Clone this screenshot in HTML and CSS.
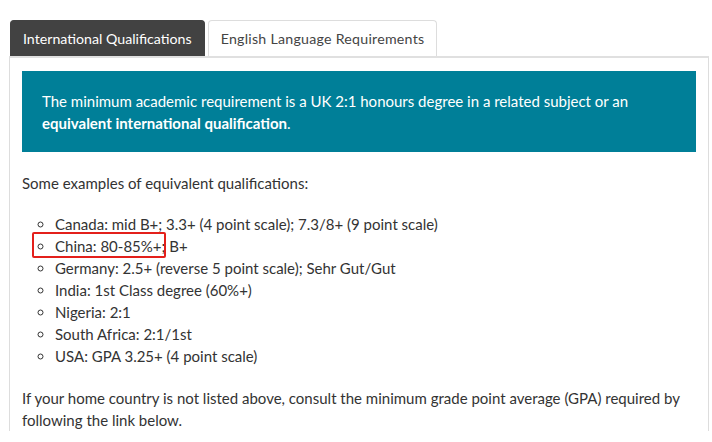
FILE: index.html
```html
<!DOCTYPE html>
<html lang="en">
<head>
<meta charset="utf-8">
<title>Entry requirements</title>
<link rel="stylesheet" href="styles.css">
</head>
<body>
<div class="tabs-wrap">
  <ul class="tabs">
    <li class="tab active">International Qualifications</li>
    <li class="tab">English Language Requirements</li>
  </ul>
  <div class="panel">
    <div class="notice">
      <p>The minimum academic requirement is a UK 2:1 honours degree in a related subject or an <strong>equivalent international qualification</strong>.</p>
    </div>
    <p class="intro">Some examples of equivalent qualifications:</p>
    <ul class="examples">
      <li>Canada: mid B+; 3.3+ (4 point scale); 7.3/8+ (9 point scale)</li>
      <li class="marked"><span class="mark-box"></span>China: 80-85%+; B+</li>
      <li>Germany: 2.5+ (reverse 5 point scale); Sehr Gut/Gut</li>
      <li>India: 1st Class degree (60%+)</li>
      <li>Nigeria: 2:1</li>
      <li>South Africa: 2:1/1st</li>
      <li>USA: GPA 3.25+ (4 point scale)</li>
    </ul>
    <p class="outro">If your home country is not listed above, consult the minimum grade point average (GPA) required by following the link below.</p>
  </div>
</div>
</body>
</html>
```
FILE: styles.css
```css
html, body {
  margin: 0;
  padding: 0;
  background: #ffffff;
}
body {
  font-family: "Lato", "Open Sans", sans-serif;
  font-size: 15px;
  color: #333333;
}
.tabs-wrap {
  padding: 20px 3px 0 9px;
}
.tabs {
  display: flex;
  gap: 3px;
  list-style: none;
  margin: 0 0 0 1px;
  padding: 0;
}
.tab {
  height: 36px;
  box-sizing: border-box;
  padding: 0 12px;
  display: flex;
  align-items: center;
  font-size: 14.2px;
  letter-spacing: 0.25px;
  border: 1px solid #dddddd;
  border-bottom: none;
  border-radius: 4px 4px 0 0;
  color: #444444;
  background: #ffffff;
}
.tab.active {
  background: #424242;
  border-color: #424242;
  color: #ffffff;
  letter-spacing: 0;
}
.panel {
  border-left: 1px solid #dddddd;
  border-right: 1px solid #dddddd;
  border-top: 2px solid #e0e0e0;
  padding: 13px 12px 0 12px;
}
.notice {
  background: #007f98;
  color: #ffffff;
  padding: 19px 20px 18px 20px;
}
.notice p {
  margin: 0;
  line-height: 22px;
}
.notice strong {
  font-weight: 700;
}
.intro {
  margin: 20px 0 19px;
  line-height: 22px;
}
.examples {
  list-style: circle;
  margin: 0 0 20px;
  padding: 0 0 0 33px;
}
.examples li {
  line-height: 22px;
}
.marked {
  position: relative;
}
.mark-box {
  position: absolute;
  left: -23px;
  top: -3px;
  width: 130px;
  height: 22px;
  border: 2px solid #e3201b;
  border-radius: 2px;
}
.outro {
  margin: 0;
  line-height: 22px;
}
```
